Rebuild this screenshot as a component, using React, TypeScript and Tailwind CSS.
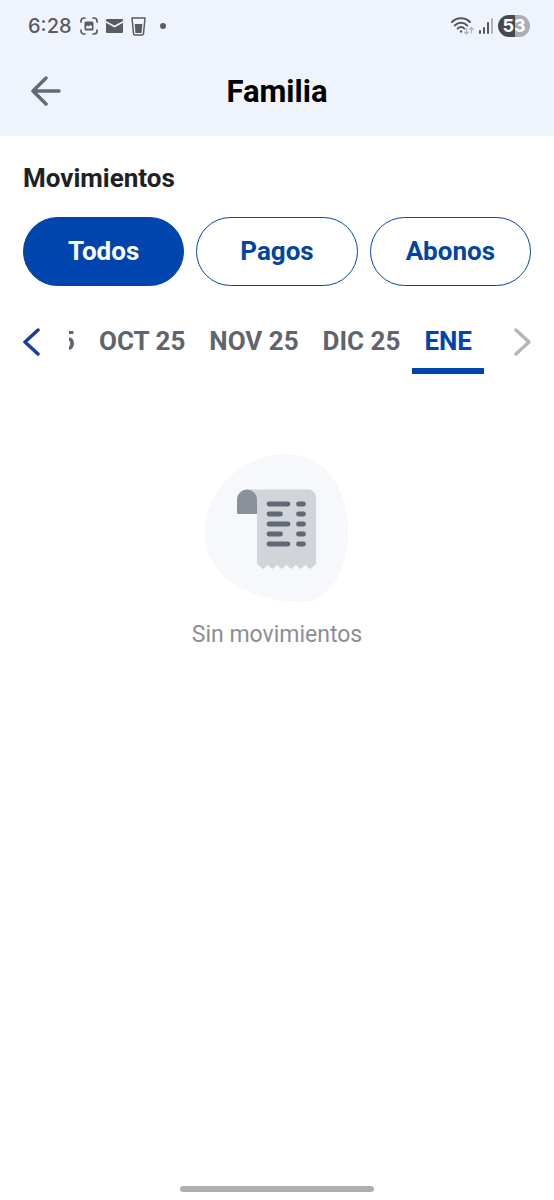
import { useState } from "react";
import clsx from "clsx";

const filters = ["Todos", "Pagos", "Abonos"];

const months = ["SEP 25", "OCT 25", "NOV 25", "DIC 25", "ENE"];

const StatusBar = () => {
  return (
    <div className="flex h-13 items-center justify-between pr-6 pl-7 text-[#5a5c61]">
      <div className="flex items-center">
        <span className="w-13 font-['Inter',sans-serif] text-xl font-medium">6:28</span>
        <svg width="18" height="18" viewBox="0 0 18 18" fill="none">
          <path
            d="M1 5V4a3 3 0 0 1 3-3h1M13 1h1a3 3 0 0 1 3 3v1M17 13v1a3 3 0 0 1-3 3h-1M5 17H4a3 3 0 0 1-3-3v-1"
            stroke="currentColor"
            strokeWidth="1.7"
            strokeLinecap="round"
          />
          <rect x="4.5" y="4.5" width="9" height="9" rx="1.5" fill="currentColor" />
          <path d="M6 11.5V10l1.7-1.7L9 9.5l1.4-1.7L12 9.500v2z" fill="#eff4fc" />
        </svg>
        <svg className="ml-2" width="17" height="14" viewBox="0 0 17 14">
          <path d="M1 0h15a1 1 0 0 1 1 1v1L8.5 6.5 0 2V1a1 1 0 0 1 1-1z" fill="currentColor" />
          <path d="M0 3.8 8.5 8.5 17 3.8V13a1 1 0 0 1-1 1H1a1 1 0 0 1-1-1z" fill="currentColor" />
        </svg>
        <svg className="ml-2" width="15" height="19" viewBox="0 0 15 19">
          <path
            d="M1 1h13l-1.5 15.5A1.5 1.5 0 0 1 11 18H4a1.5 1.5 0 0 1-1.5-1.5z"
            fill="none"
            stroke="currentColor"
            strokeWidth="1.5"
            strokeLinejoin="round"
          />
          <path d="M3.7 7h7.6l-.7 9H4.4z" fill="currentColor" />
        </svg>
        <span className="ml-3.5 size-1.5 rounded-full bg-current" />
      </div>
      <div className="flex items-center">
        <svg width="24" height="18" viewBox="0 0 24 18" fill="none" strokeLinecap="round">
          <g stroke="#55575c" strokeWidth="2">
            <path d="M1 5C6 0 14 0 19 5" />
            <path d="M3.8 8.5c3.6-3.6 8.8-3.6 12.4 0" />
            <path d="M6.6 11.6c2-2 4.8-2 6.8 0" />
          </g>
          <circle cx="10" cy="14.5" r="1.2" fill="#55575c" />
          <path
            d="M15.5 11.5v5.5M13.7 15.2l1.8 1.8 1.8-1.8M20.5 16v-5.5M18.7 12.3l1.8-1.8 1.8 1.8"
            stroke="#b4b6bd"
            strokeWidth="1.4"
          />
        </svg>
        <svg className="ml-1" width="15" height="16" viewBox="0 0 15 16">
          <rect x="0" y="12" width="2" height="4" rx="1" fill="#55575c" />
          <rect x="4" y="9" width="2" height="7" rx="1" fill="#55575c" />
          <rect x="8" y="4" width="2" height="12" rx="1" fill="#55575c" />
          <rect x="12" y="0" width="2" height="16" rx="1" fill="#b4b6bd" />
        </svg>
        <span className="ml-1 flex h-5.5 w-8 items-center justify-center rounded-full bg-linear-to-r from-[#48494e] from-53% to-[#acaeb6] to-53% font-['Inter',sans-serif] text-lg font-bold text-white">
          53
        </span>
      </div>
    </div>
  );
};

const Chevron = ({ d }: { d: string }) => (
  <svg width="17" height="28" viewBox="0 0 17 28" fill="none">
    <path d={d} stroke="currentColor" strokeWidth="3.5" strokeLinecap="round" strokeLinejoin="round" />
  </svg>
);

const ReceiptIllustration = () => {
  const rows = [50, 60, 70, 80, 90];

  return (
    <svg width="144" height="148" viewBox="0 0 144 148">
      <path
        d="M82 0c36 0 61 32 61 78 0 38-18 70-47 70C62 148 0 132 0 79 0 35 38 0 82 0z"
        fill="#f6f8fb"
      />
      <path
        d="M42 35.5h61a8 8 0 0 1 8 8V110l-6 5-4.7-4-4.7 4-4.7-4-4.7 4-4.7-4-4.7 4-4.7-4-4.7 4-4.7-4-4.7 4-6-5V58z"
        fill="#d1d5da"
      />
      <path d="M32 45.5a10 10 0 0 1 20 0V60H33.5a1.5 1.5 0 0 1-1.5-1.5z" fill="#8a9099" />
      <g stroke="#616874" strokeWidth="4.8" strokeLinecap="round">
        {rows.map((y, i) => (
          <path key={y} d={i % 2 ? `M64 ${y}h11.5M93.5 ${y}h5` : `M64 ${y}h19M93.5 ${y}h5`} />
        ))}
      </g>
    </svg>
  );
};

export default function App() {
  const [filter, setFilter] = useState("Todos");
  const [month, setMonth] = useState("ENE");

  return (
    <div className="flex min-h-screen flex-col bg-white font-['Roboto',sans-serif]">
      <header className="bg-[#eff4fc] pb-1">
        <StatusBar />
        <div className="grid h-20 grid-cols-[1fr_auto_1fr] items-center px-7">
          <button aria-label="Volver" className="flex size-9 items-center justify-center text-[#656a73]">
            <svg width="32" height="32" viewBox="0 0 32 32" fill="none">
              <path
                d="M16 1 3 14l13 13M3 14h26"
                stroke="currentColor"
                strokeWidth="3.5"
                strokeLinecap="round"
                strokeLinejoin="round"
                className="translate-y-px"
              />
            </svg>
          </button>
          <h1 className="text-[31px] leading-9 font-bold text-black">Familia</h1>
        </div>
      </header>

      <main className="flex flex-col pt-6">
        <h2 className="px-[23px] text-[26px] leading-9 font-bold text-[#202124]">Movimientos</h2>

        <div className="mt-[21px] grid grid-cols-3 gap-3 px-[23px]">
          {filters.map((name) => (
            <button
              key={name}
              onClick={() => setFilter(name)}
              className={clsx(
                "h-[69px] rounded-full border border-[#0045ad] text-[26px] font-bold",
                name === filter ? "bg-[#0045ad] text-white" : "bg-white text-[#0045a5]",
              )}
            >
              {name}
            </button>
          ))}
        </div>

        <div className="mt-7 flex items-start justify-between px-[23px]">
          <button aria-label="Meses anteriores" className="flex h-14 w-[46px] items-center text-[#1f3c9c]">
            <Chevron d="M15 2 2 14l13 12" />
          </button>
          <div className="flex min-w-0 flex-1 justify-end overflow-hidden">
            {months.map((name) => (
              <button
                key={name}
                onClick={() => setMonth(name)}
                className={clsx(
                  "h-15 shrink-0 border-b-6 px-3 text-[26px] font-bold",
                  name === month ? "border-[#0045ad] text-[#0045ad]" : "border-transparent text-[#5f646d]",
                )}
              >
                {name}
              </button>
            ))}
          </div>
          <button aria-label="Meses siguientes" className="flex h-14 w-[47px] items-center justify-end text-[#b5b6bc]">
            <Chevron d="M2 2l13 12L2 26" />
          </button>
        </div>

        <div className="mt-20 flex flex-col items-center">
          <ReceiptIllustration />
          <p className="mt-[17px] text-[23px] leading-8 text-[#8b8e97]">Sin movimientos</p>
        </div>
      </main>

      <div className="mx-auto mt-auto mb-2 h-1.5 w-[35%] rounded-full bg-[#afafaf]" />
    </div>
  );
}
